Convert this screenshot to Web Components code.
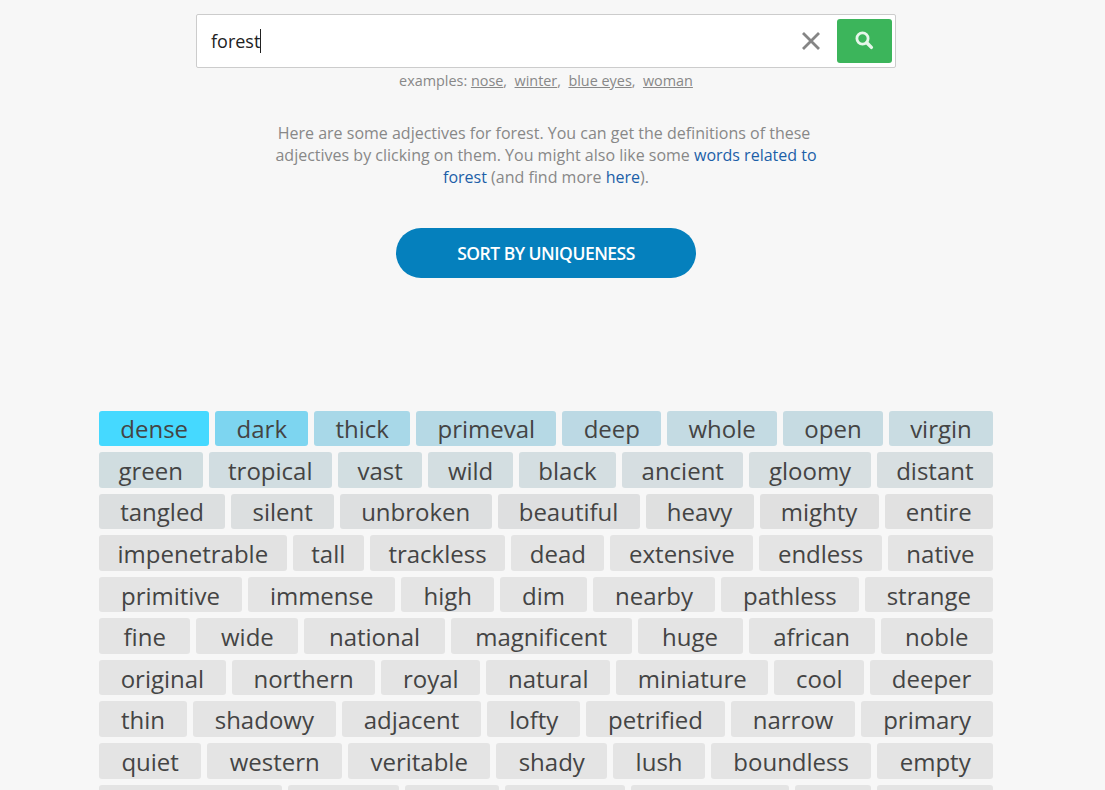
<!DOCTYPE html>
<html>
<head>
<meta charset="utf-8">
<title>adjectives for forest</title>
<style>
  html, body { margin: 0; height: 790px; overflow: hidden; background: #f7f7f7; font-family: "Open Sans", sans-serif; }
</style>
</head>
<body>
<word-page></word-page>

<script>
const WORD_ROWS = [
  ["dense", "dark", "thick", "primeval", "deep", "whole", "open", "virgin"],
  ["green", "tropical", "vast", "wild", "black", "ancient", "gloomy", "distant"],
  ["tangled", "silent", "unbroken", "beautiful", "heavy", "mighty", "entire"],
  ["impenetrable", "tall", "trackless", "dead", "extensive", "endless", "native"],
  ["primitive", "immense", "high", "dim", "nearby", "pathless", "strange"],
  ["fine", "wide", "national", "magnificent", "huge", "african", "noble"],
  ["original", "northern", "royal", "natural", "miniature", "cool", "deeper"],
  ["thin", "shadowy", "adjacent", "lofty", "petrified", "narrow", "primary"],
  ["quiet", "western", "veritable", "shady", "lush", "boundless", "empty"],
  ["neighbouring", "central", "bleak", "gigantic", "mysterious", "rich", "remote"],
];

// first words by rank are tinted blue, everything after this list is plain grey
const SHADES = [
  "#45d9ff", "#7dd5f0", "#a8d8e8", "#b6d9e5", "#bcd9e4", "#c4dbe3", "#c6dbe2", "#c9dce2",
  "#d0dde0", "#d1dde1", "#d2dee1", "#d3dee1", "#d4dee1", "#d6dee1", "#d7dfe1", "#d8dfe1",
  "#dcdfe0", "#dcdfe0", "#dddfe0", "#dedfe0", "#dfe0e0", "#e0e0e0", "#e1e1e1",
  "#e2e2e2", "#e3e3e3", "#e3e3e3",
];

customElements.define("word-search", class extends HTMLElement {
  constructor() {
    super();
    this.attachShadow({ mode: "open" }).innerHTML = `
      <style>
        :host {
          display: flex;
          align-items: center;
          box-sizing: border-box;
          width: 700px;
          height: 54px;
          padding: 0 3px 0 14px;
          background: #fff;
          border: 1px solid #ccc;
          border-radius: 2px;
        }
        #query { flex: 1; display: flex; align-items: center; font-size: 18px; color: #222; }
        #caret { width: 1px; height: 24px; background: #222; }
        #clear { display: block; margin-right: 16px; }
        #go {
          display: flex;
          align-items: center;
          justify-content: center;
          width: 55px;
          height: 44px;
          background: #3cb55b;
          border-radius: 3px;
        }
      </style>
      <div id="query"><span><slot></slot></span><span id="caret"></span></div>
      <svg id="clear" width="20" height="20" viewBox="0 0 20 20">
        <path d="M2 2 L18 18 M18 2 L2 18" stroke="#858585" stroke-width="2.8" fill="none"/>
      </svg>
      <div id="go">
        <svg width="20" height="20" viewBox="0 0 20 20" fill="none" stroke="#e6f6ea" style="margin:-2px 2px 0 0">
          <circle cx="8.5" cy="8.5" r="5.6" stroke-width="2.8"/>
          <path d="M12.8 12.8 L17.4 17.4" stroke-width="3.4" stroke-linecap="round"/>
        </svg>
      </div>
    `;
  }
});

customElements.define("example-links", class extends HTMLElement {
  constructor() {
    super();
    const links = this.getAttribute("words").split(",");
    this.attachShadow({ mode: "open" }).innerHTML = `<style>
        :host { display: block; margin-top: 3px; font-size: 14.4px; line-height: 20px; color: #888; white-space: pre; }
        a { color: inherit; text-decoration: underline; }
      </style>examples: ${links.map((w) => `<a href="#">${w}</a>`).join(",  ")}`;
  }
});

customElements.define("intro-text", class extends HTMLElement {
  constructor() {
    super();
    this.attachShadow({ mode: "open" }).innerHTML = `
      <style>
        :host { display: block; width: 560px; margin-top: 31px; font-size: 16px; line-height: 22px; color: #888; text-align: center; }
        ::slotted(a) { color: #1c5fa8; text-decoration: none; }
      </style>
      <slot></slot>
    `;
  }
});

customElements.define("sort-button", class extends HTMLElement {
  constructor() {
    super();
    this.attachShadow({ mode: "open" }).innerHTML = `
      <style>
        :host {
          display: flex;
          align-items: center;
          justify-content: center;
          box-sizing: border-box;
          width: 300px;
          height: 50px;
          margin-top: 40px;
          padding-bottom: 1px;
          background: #0580bd;
          border-radius: 25px;
          color: #fff;
          font-size: 17.5px;
          font-weight: 600;
          letter-spacing: -0.5px;
        }
      </style>
      <slot></slot>
    `;
  }
});

customElements.define("adjective-tag", class extends HTMLElement {
  constructor() {
    super();
    this.attachShadow({ mode: "open" }).innerHTML = `
      <style>
        :host {
          display: block;
          flex: 1 1 auto;
          box-sizing: border-box;
          padding: 0.75px 10px 0;
          height: 35.55px;
          line-height: 35px;
          text-align: center;
          font-size: 24px;
          color: #444;
          background: var(--shade, #e4e4e4);
          border-radius: 3px;
        }
      </style>
      <slot></slot>
    `;
  }
});

customElements.define("adjective-cloud", class extends HTMLElement {
  constructor() {
    super();
    this.attachShadow({ mode: "open" }).innerHTML = `
      <style>
        :host { display: flex; flex-direction: column; gap: 6px; width: 894px; margin-top: 132.6px; }
        .row { display: flex; gap: 6px; }
      </style>
    `;
    let rank = 0;
    for (const words of WORD_ROWS) {
      const row = document.createElement("div");
      row.className = "row";
      for (const word of words) {
        const tag = document.createElement("adjective-tag");
        tag.textContent = word;
        if (SHADES[rank]) tag.style.setProperty("--shade", SHADES[rank]);
        rank++;
        row.appendChild(tag);
      }
      this.shadowRoot.appendChild(row);
    }
  }
});

customElements.define("word-page", class extends HTMLElement {
  constructor() {
    super();
    this.attachShadow({ mode: "open" }).innerHTML = `
      <style>
        :host { display: flex; flex-direction: column; align-items: center; width: 1092px; padding-top: 14px; }
      </style>
      <word-search>forest</word-search>
      <example-links words="nose,winter,blue eyes,woman"></example-links>
      <intro-text>
        Here are some adjectives for forest. You can get the definitions of <span style="padding-right:4px">these</span>
        adjectives by clicking on them. You might also like some <a href="#">words related to
        forest</a> (and find more <a href="#">here</a>).
      </intro-text>
      <sort-button>SORT BY UNIQUENESS</sort-button>
      <adjective-cloud></adjective-cloud>
    `;
  }
});
</script>
</body>
</html>
